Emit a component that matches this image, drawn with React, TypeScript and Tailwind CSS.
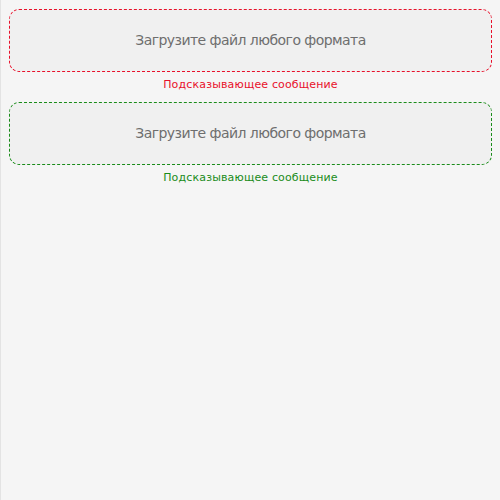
import React from 'react'

function Upload({ tone, hint }: { tone: 'error' | 'success'; hint: string }) {
  const border = tone === 'error' ? 'border-[#e8102a]' : 'border-[#1a8c1a]'
  const text = tone === 'error' ? 'text-[#e8102a]' : 'text-[#1a8c1a]'
  return (
    <div className="flex flex-col">
      <div className={`h-[63px] rounded-[10px] border border-dashed ${border} bg-[#f0f0f0] flex items-center justify-center`}>
        <span className="text-[14px] tracking-[-0.55px] text-[#6e6e6e]">Загрузите файл любого формата</span>
      </div>
      <div className={`mt-[6px] text-center text-[11px] leading-[14px] tracking-[0.15px] ${text}`}>{hint}</div>
    </div>
  )
}

export default function App() {
  return (
    <div className="min-h-[500px] w-[500px] bg-[#f5f5f5] border-l border-[#e3e3e3] pl-[8px] pr-[8px] pt-[9px] flex flex-col gap-[10px]" style={{ fontFamily: '"DejaVu Sans", sans-serif' }}>
      <Upload tone="error" hint="Подсказывающее сообщение" />
      <Upload tone="success" hint="Подсказывающее сообщение" />
    </div>
  )
}
